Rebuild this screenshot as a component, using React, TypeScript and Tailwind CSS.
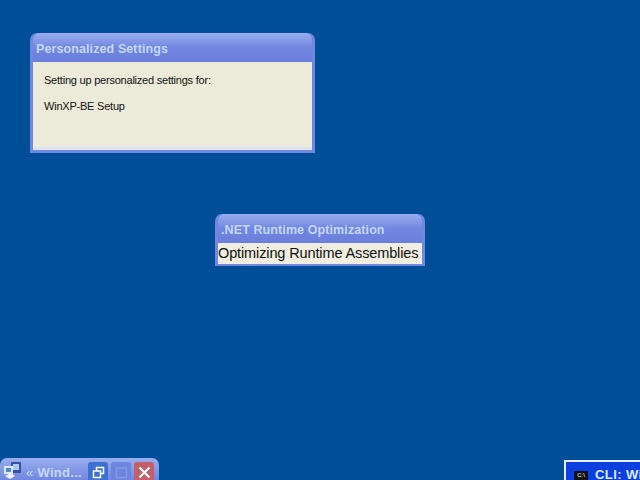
const titleFont = "font-['Liberation_Sans',sans-serif]";

function Dialog({ title, className, children }: { title: string; className: string; children: React.ReactNode }) {
  return (
    <div className={`absolute flex flex-col rounded-t-[7px] bg-[#7288de] px-[3px] pb-[3px] ${className}`}>
      <div className="flex h-[29px] shrink-0 items-center rounded-t-[7px] bg-gradient-to-b from-[#9aaeee] via-[#7187e0] to-[#6a7edb] pl-[3px] pt-[3px] text-[12.5px] font-bold tracking-[0.1px] text-[#c4d8f6]">
        {title}
      </div>
      {children}
    </div>
  );
}

function CaptionButton({ className, children }: { className: string; children?: React.ReactNode }) {
  return <div className={`flex h-[20px] w-[20px] items-center justify-center rounded-t-[3px] ${className}`}>{children}</div>;
}

export default function App() {
  return (
    <div className={`relative h-[480px] w-[640px] overflow-hidden bg-[#004e98] ${titleFont}`}>
      <Dialog title="Personalized Settings" className="left-[30px] top-[33px] h-[120px] w-[285px]">
        <div className="flex-1 border-b-[3px] border-[#dfe2f2] bg-[#ecead9] px-[11px] pt-[9px] text-[11px] tracking-[-0.22px] text-[#111]">
          <p className="leading-[18px]">Setting up personalized settings for:</p>
          <p className="mt-2 leading-[18px]">WinXP-BE Setup</p>
        </div>
      </Dialog>

      <Dialog title=".NET Runtime Optimization" className="left-[215px] top-[214px] h-[52px] w-[210px]">
        <div className="flex h-[21px] items-center whitespace-nowrap bg-[#f0eee0] text-[14.5px] tracking-[-0.12px] text-[#111]">
          Optimizing Runtime Assemblies
        </div>
      </Dialog>

      {/* minimized installer window */}
      <div className="absolute bottom-0 left-0 flex h-[22px] w-[159px] items-start rounded-t-[7px] bg-gradient-to-b from-[#9aaeee] to-[#7187e0] pl-[3px] pt-[2px]">
        <svg width="20" height="20" viewBox="0 0 20 20" className="shrink-0">
          <rect x="8" y="2" width="10" height="11" fill="#3a4fa8" />
          <rect x="10" y="4" width="6" height="6" fill="#a9cdf0" />
          <rect x="1" y="6" width="9" height="8" fill="#dbe6f8" />
          <path d="M2 16l6-3 4 3-5 3z" fill="#f1f4fb" />
          <rect x="3" y="8" width="5" height="4" fill="#4e86cf" />
        </svg>
        <span className="ml-[3px] mt-[3px] whitespace-nowrap text-[13px] font-bold tracking-[0.3px] text-[#c4d8f6]">
          <span className="font-normal">«</span> Wind...
        </span>
        <div className="ml-auto mr-[5px] mt-[2px] flex gap-[3px]">
          <CaptionButton className="bg-[#3f6fd0]">
            <svg width="13" height="13" viewBox="0 0 13 13" fill="none" stroke="#fff" strokeWidth="1.5">
              <rect x="4.5" y="1.5" width="7" height="6" />
              <rect x="1.5" y="5" width="7" height="6.5" fill="#3f6fd0" />
            </svg>
          </CaptionButton>
          <CaptionButton className="bg-[#6d85de]">
            <svg width="13" height="13" viewBox="0 0 13 13" fill="none" stroke="#7f9ae6" strokeWidth="1.5">
              <rect x="1.5" y="2" width="10" height="9.5" />
            </svg>
          </CaptionButton>
          <CaptionButton className="bg-[#c25f68]">
            <svg width="13" height="13" viewBox="0 0 13 13" stroke="#fff" strokeWidth="2.2">
              <path d="M1.5 1.5l10 10M11.5 1.5l-10 10" />
            </svg>
          </CaptionButton>
        </div>
      </div>

      {/* command prompt window, mostly off screen */}
      <div className="absolute bottom-0 right-0 h-[20px] w-[76px] overflow-hidden border-l-2 border-t-2 border-[#e8eefc] bg-[#0b3fe0] pl-[8px] pt-[6px]">
        <div className="flex items-center gap-[7px] whitespace-nowrap text-[13px] font-bold leading-[14px] tracking-[0.4px] text-[#d9ecff]">
          <span className="flex h-[9px] w-[14px] shrink-0 items-center justify-center bg-[#111] text-[6px] font-normal leading-none tracking-normal text-white">C:\</span>
          <span>CLI: Wi</span>
        </div>
      </div>
    </div>
  );
}
